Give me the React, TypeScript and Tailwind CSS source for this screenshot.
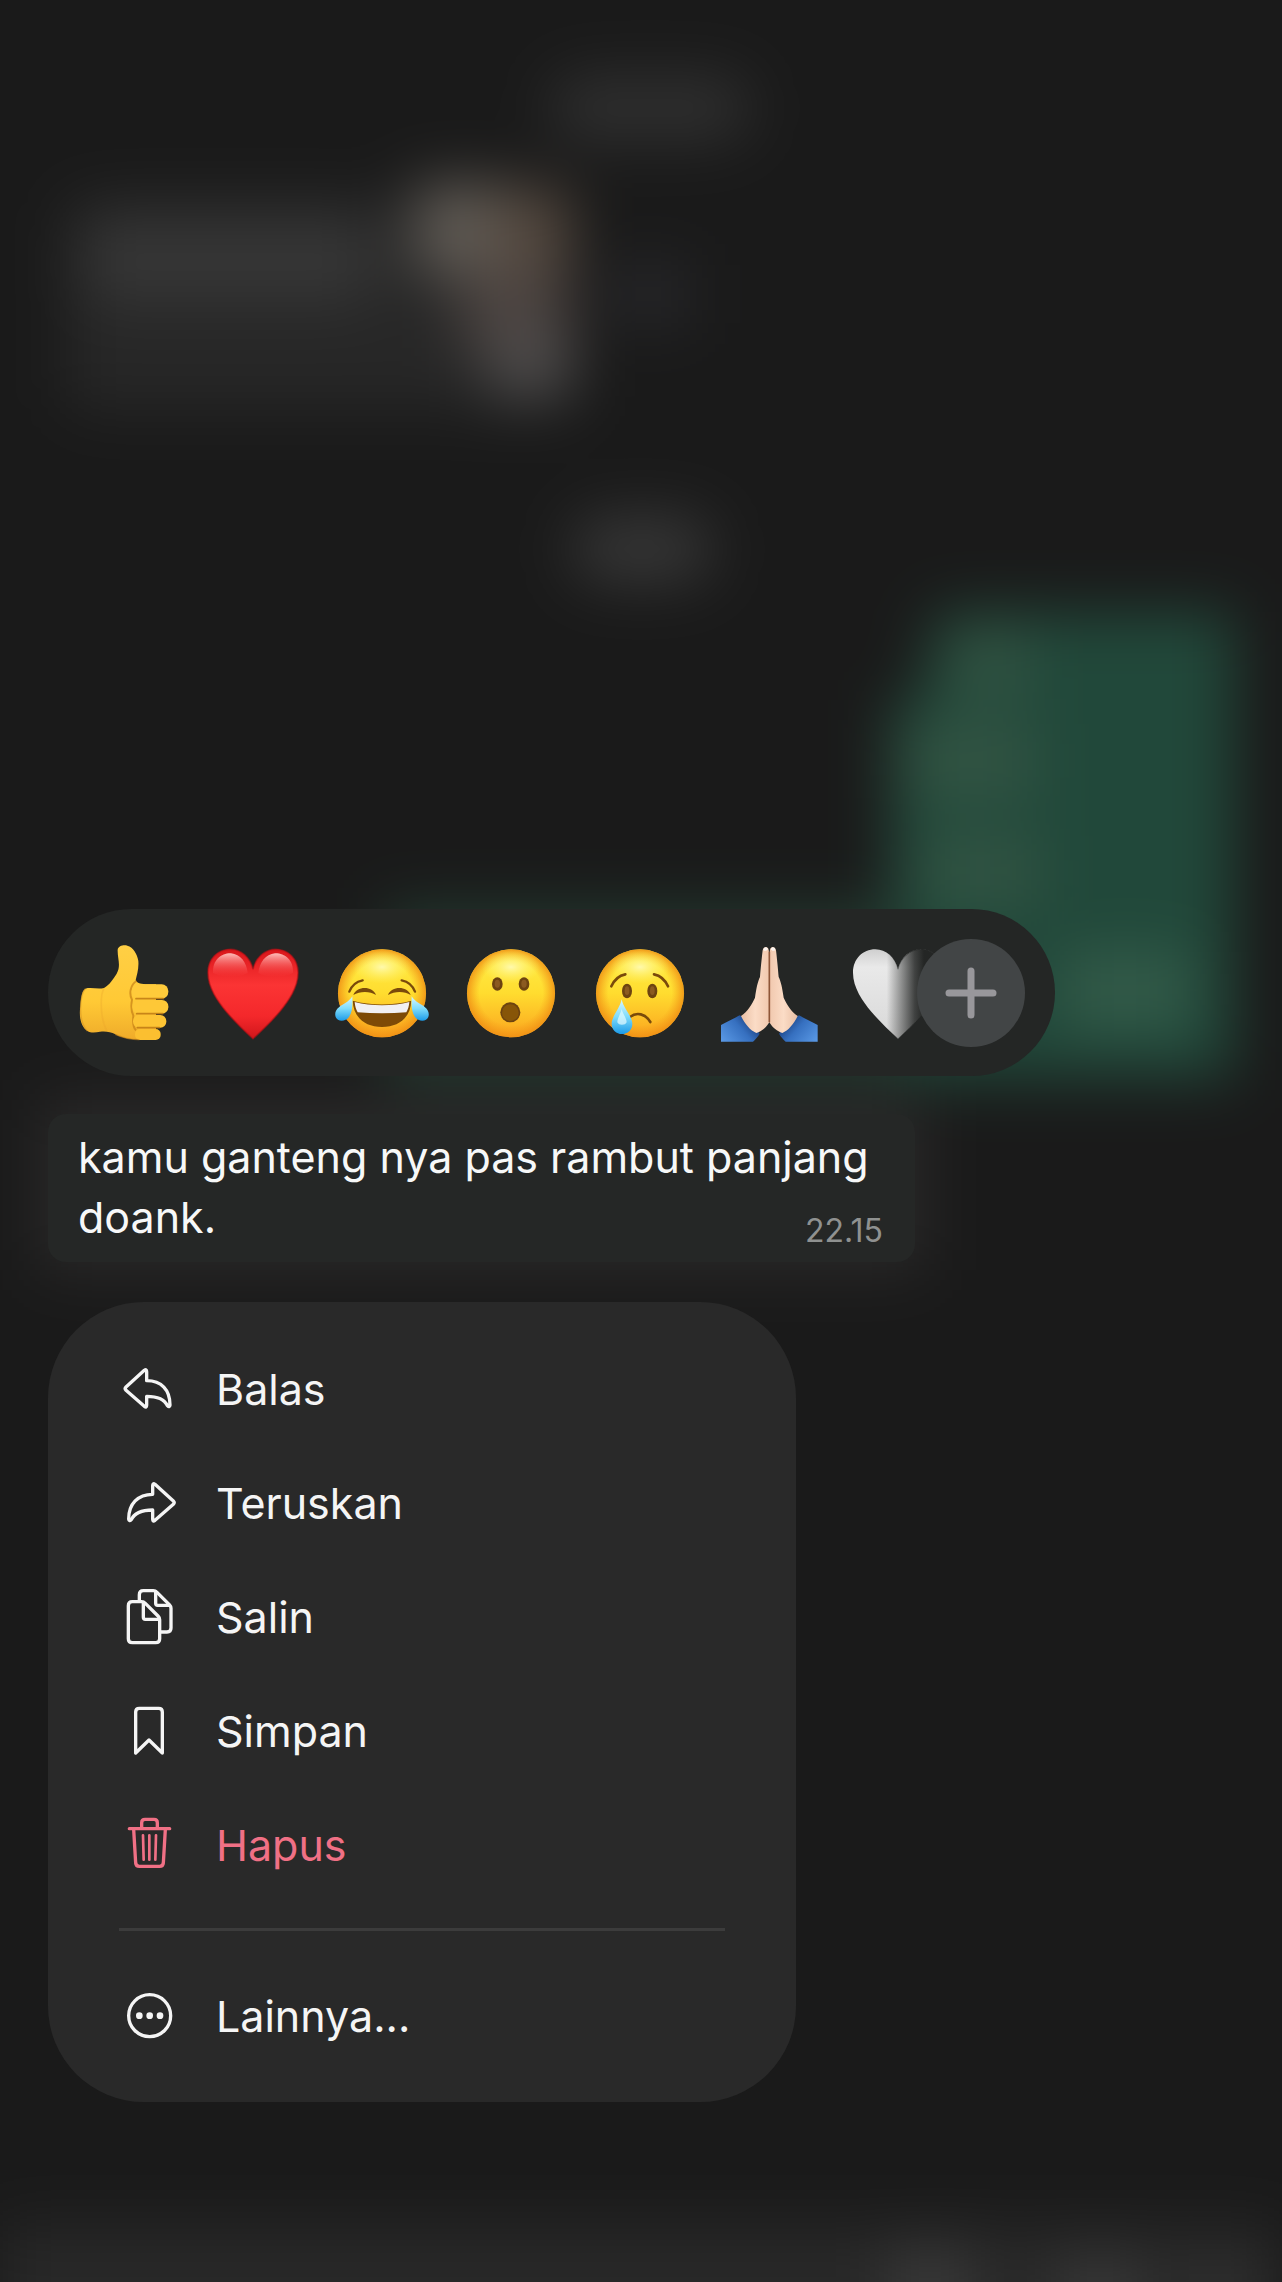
import React from 'react';

type MenuItem = {
  id: string;
  label: string;
  icon: React.ReactNode;
  danger?: boolean;
};

const HEART =
  'M144 281C112 252 84 224 64 200C38 168 9 128 9 83C9 42 38 13 76 13C108 13 136 38 144 73C152 38 180 13 212 13C250 13 279 42 279 83C279 128 250 168 224 200C204 224 176 252 144 281Z';

function EmojiSvg({ children }: { children: React.ReactNode }) {
  return (
    <svg viewBox="0 0 288 288" className="w-24 h-24 overflow-visible" aria-hidden="true">
      {children}
    </svg>
  );
}

function Face() {
  return (
    <>
      <circle cx="144" cy="145" r="132" fill="url(#faceBase)" />
      <circle cx="144" cy="145" r="132" fill="url(#faceRim)" />
      <ellipse cx="144" cy="66" rx="88" ry="50" fill="url(#faceShine)" />
    </>
  );
}

function ThumbsUp() {
  return (
    <EmojiSvg>
      <path
        d="M125 14C127 3 142 -1 154 2C172 6 184 28 187 48C189 72 182 92 179 106C184 116 198 118 214 118H240V284H196C170 284 140 280 118 268C104 260 88 258 72 260C58 263 44 264 34 258C16 246 8 218 13 184C15 158 18 136 28 131C46 126 66 134 84 129C100 120 112 102 122 86C136 62 124 40 125 14Z"
        fill="url(#handSkin)"
      />
      <path d="M84 130C72 150 72 220 92 256" fill="none" stroke="#e9a12a" strokeWidth="5" opacity="0.3" />
      <path d="M28 131C12 150 4 226 34 258" fill="none" stroke="#d38f20" strokeWidth="4" opacity="0.5" />
      <path d="M182 108C164 118 158 146 168 164C164 186 168 204 172 212C170 232 174 250 180 256" fill="none" stroke="#c47f17" strokeWidth="6" opacity="0.7" />
      <rect x="167" y="118" width="110" height="43" rx="20" fill="#ffcb3b" />
      <rect x="169" y="165" width="108" height="41" rx="19" fill="#fec837" />
      <rect x="171" y="210" width="100" height="38" rx="18" fill="#fdc434" />
      <rect x="177" y="252" width="77" height="33" rx="15" fill="#fbbf30" />
      <path d="M180 161H262M182 206H260M184 248H250" stroke="#bb7612" strokeWidth="5" strokeLinecap="round" opacity="0.8" />
      <path d="M190 284C160 284 140 278 118 268" fill="none" stroke="#cf8a1c" strokeWidth="4" opacity="0.6" />
    </EmojiSvg>
  );
}

function RedHeart() {
  return (
    <EmojiSvg>
      <path d={HEART} fill="url(#heartRed)" />
      <path d={HEART} fill="none" stroke="#b90f14" strokeWidth="5" opacity="0.55" />
      <path d="M24 84C22 44 50 24 78 25C106 28 124 50 128 84C96 100 60 100 24 84Z" fill="url(#heartShine)" />
      <path d="M264 84C266 44 238 24 210 25C182 28 164 50 160 84C192 100 228 100 264 84Z" fill="url(#heartShine)" />
    </EmojiSvg>
  );
}

function Joy() {
  return (
    <EmojiSvg>
      <Face />
      <g fill="none" stroke="#7a4a0b" strokeLinecap="round">
        <path d="M46 140C52 124 66 110 86 106" strokeWidth="7" />
        <path d="M243 140C237 124 223 110 203 106" strokeWidth="7" />
      </g>
      <path d="M58 150C68 122 116 122 126 150C108 138 78 138 58 150Z" fill="#7a4a0b" />
      <path d="M162 150C172 122 220 122 230 150C212 138 182 138 162 150Z" fill="#7a4a0b" />
      <path d="M56 167C110 182 178 182 232 167C230 216 196 246 144 246C92 246 58 216 56 167Z" fill="#7d4a06" />
      <path d="M62 171C112 184 176 184 226 171C225 184 222 193 217 202C170 206 118 206 71 202C66 193 63 184 62 171Z" fill="#f1f0f3" />
      <path d="M55 154C56 180 56 200 45 216C33 232 10 230 5 216C-2 194 20 182 34 174C44 168 50 162 55 154Z" fill="url(#tear)" />
      <path d="M233 154C232 180 232 200 243 216C255 232 278 230 283 216C290 194 268 182 254 174C244 168 238 162 233 154Z" fill="url(#tear)" />
    </EmojiSvg>
  );
}

function Surprised() {
  return (
    <EmojiSvg>
      <Face />
      <ellipse cx="103" cy="117" rx="16" ry="20" fill="#6d4310" />
      <ellipse cx="183" cy="117" rx="16" ry="20" fill="#6d4310" />
      <ellipse cx="103" cy="116" rx="8" ry="12" fill="#8b5a20" />
      <ellipse cx="183" cy="116" rx="8" ry="12" fill="#8b5a20" />
      <circle cx="142" cy="202" r="30" fill="#6d4310" />
      <circle cx="142" cy="203" r="25" fill="#875508" />
    </EmojiSvg>
  );
}

function Crying() {
  return (
    <EmojiSvg>
      <Face />
      <g fill="none" stroke="#7a4a0b" strokeWidth="8" strokeLinecap="round">
        <path d="M58 124C66 106 80 92 100 88" />
        <path d="M228 124C220 106 206 92 186 88" />
        <path d="M114 216C134 200 160 206 175 231" />
      </g>
      <ellipse cx="105" cy="138" rx="15" ry="22" fill="#6d4310" />
      <ellipse cx="181" cy="138" rx="15" ry="22" fill="#6d4310" />
      <ellipse cx="105" cy="137" rx="7" ry="13" fill="#8b5a20" />
      <ellipse cx="181" cy="137" rx="7" ry="13" fill="#8b5a20" />
      <path d="M89 163C94 190 121 214 121 236C121 254 107 267 90 267C73 267 59 254 59 236C59 214 84 190 89 163Z" fill="url(#tear)" />
      <path d="M89 192C94 210 104 220 104 232C100 242 80 242 76 232C76 220 85 208 89 192Z" fill="#e6fbff" opacity="0.7" />
    </EmojiSvg>
  );
}

function PrayHalf() {
  return (
    <>
      <path d="M0 240C18 230 38 222 56 211C78 222 100 244 116 266C110 276 102 284 96 290H0Z" fill="url(#sleeve)" />
      <path
        d="M143 14C141 4 128 3 125 16C121 50 119 74 117 96C110 110 106 130 102 158C94 176 80 200 60 213C72 238 88 256 106 264C122 258 134 250 145 232V30Z"
        fill="url(#praySkin)"
      />
      <path d="M127 14C129 6 137 4 141 12C139 18 130 20 127 14Z" fill="#fff" opacity="0.8" />
    </>
  );
}

function Pray() {
  return (
    <EmojiSvg>
      <PrayHalf />
      <g transform="translate(290 0) scale(-1 1)">
        <PrayHalf />
      </g>
      <path d="M145 20V232" stroke="#8f5638" strokeWidth="5" />
    </EmojiSvg>
  );
}

function WhiteHeart() {
  return (
    <EmojiSvg>
      <path d={HEART} fill="url(#heartWhite)" />
      <path d={HEART} fill="url(#heartFade)" stroke="url(#heartFade)" strokeWidth="3" />
    </EmojiSvg>
  );
}

// Gradients shared by all the emoji drawings
function EmojiGradients() {
  return (
    <svg width="0" height="0" className="absolute" aria-hidden="true">
      <defs>
        <linearGradient id="faceBase" x1="0" y1="0" x2="0" y2="1">
          <stop offset="0" stopColor="#fff04a" />
          <stop offset="0.5" stopColor="#ffdc2f" />
          <stop offset="1" stopColor="#fba51f" />
        </linearGradient>
        <radialGradient id="faceRim" cx="0.5" cy="0.5" r="0.5">
          <stop offset="0.72" stopColor="#f59a17" stopOpacity="0" />
          <stop offset="1" stopColor="#ef8f14" stopOpacity="0.85" />
        </radialGradient>
        <radialGradient id="faceShine">
          <stop offset="0" stopColor="#fffbb8" stopOpacity="0.9" />
          <stop offset="1" stopColor="#fff46a" stopOpacity="0" />
        </radialGradient>
        <linearGradient id="handSkin" x1="0" y1="0" x2="0" y2="1">
          <stop offset="0" stopColor="#ffcf45" />
          <stop offset="0.6" stopColor="#ffc935" />
          <stop offset="1" stopColor="#efab2a" />
        </linearGradient>
        <linearGradient id="heartRed" x1="0" y1="0" x2="0" y2="1">
          <stop offset="0" stopColor="#d9161b" />
          <stop offset="0.4" stopColor="#fb3434" />
          <stop offset="0.75" stopColor="#f4282b" />
          <stop offset="1" stopColor="#d0161b" />
        </linearGradient>
        <linearGradient id="heartShine" x1="0" y1="0" x2="0" y2="1">
          <stop offset="0" stopColor="#ffc4c0" stopOpacity="0.95" />
          <stop offset="1" stopColor="#ff4545" stopOpacity="0" />
        </linearGradient>
        <linearGradient id="tear" x1="0" y1="0" x2="0" y2="1">
          <stop offset="0" stopColor="#d9f7ff" />
          <stop offset="0.5" stopColor="#7fdcfb" />
          <stop offset="1" stopColor="#1c9be8" />
        </linearGradient>
        <linearGradient id="sleeve" x1="0" y1="1" x2="1" y2="0.4">
          <stop offset="0" stopColor="#5b9ae6" />
          <stop offset="0.6" stopColor="#3670c0" />
          <stop offset="1" stopColor="#173a78" />
        </linearGradient>
        <linearGradient id="praySkin" x1="0" y1="0" x2="1" y2="0">
          <stop offset="0" stopColor="#e9bfa4" />
          <stop offset="0.5" stopColor="#fbdcc6" />
          <stop offset="1" stopColor="#f1c8ae" />
        </linearGradient>
        <linearGradient id="heartWhite" x1="0" y1="0" x2="0" y2="1">
          <stop offset="0" stopColor="#cfcfcf" />
          <stop offset="0.2" stopColor="#e9e9e9" />
          <stop offset="1" stopColor="#d8d8d8" />
        </linearGradient>
        <linearGradient id="heartFade" gradientUnits="userSpaceOnUse" x1="110" y1="0" x2="222" y2="0">
          <stop offset="0" stopColor="#242625" stopOpacity="0" />
          <stop offset="0.75" stopColor="#242625" stopOpacity="0.85" />
          <stop offset="1" stopColor="#242625" />
        </linearGradient>
      </defs>
    </svg>
  );
}

function Icon({ children }: { children: React.ReactNode }) {
  return (
    <svg
      viewBox="0 0 180 180"
      className="w-[60px] h-[60px] shrink-0"
      fill="none"
      stroke="currentColor"
      strokeWidth="10"
      strokeLinecap="round"
      strokeLinejoin="round"
      aria-hidden="true"
    >
      {children}
    </svg>
  );
}

const reactions = [
  { id: 'jempol', label: 'Jempol', emoji: <ThumbsUp /> },
  { id: 'hati', label: 'Hati', emoji: <RedHeart /> },
  { id: 'tertawa', label: 'Tertawa', emoji: <Joy /> },
  { id: 'kaget', label: 'Kaget', emoji: <Surprised /> },
  { id: 'sedih', label: 'Sedih', emoji: <Crying /> },
  { id: 'terima-kasih', label: 'Terima kasih', emoji: <Pray /> },
  { id: 'hati-putih', label: 'Hati putih', emoji: <WhiteHeart /> },
];

const menuItems: MenuItem[] = [
  {
    id: 'reply',
    label: 'Balas',
    icon: (
      <Icon>
        <path d="M24 84L79 34Q86 29 86 38V65C130 65 156 92 156 138Q155 147 148 140C140 122 124 112 86 112V139Q86 147 79 142L24 94Q19 89 24 84Z" />
      </Icon>
    ),
  },
  {
    id: 'forward',
    label: 'Teruskan',
    icon: (
      <Icon>
        <path d="M166 84L111 34Q104 29 104 38V64C60 64 32 92 32 138Q33 147 40 140C48 122 66 111 104 111V139Q104 147 111 142L166 94Q171 89 166 84Z" />
      </Icon>
    ),
  },
  {
    id: 'copy',
    label: 'Salin',
    icon: (
      <Icon>
        <path d="M43 44H71Q77 44 82 49L120 87Q125 92 125 98V155Q125 167 113 167H43Q31 167 31 155V56Q31 44 43 44Z" />
        <path d="M76 46V91Q76 97 82 97H123" />
        <path d="M64 42V23Q64 11 76 11H106Q112 11 117 16L154 53Q159 58 159 64V123Q159 135 147 135H129" />
        <path d="M113 14V49Q113 55 119 55H155" />
      </Icon>
    ),
  },
  {
    id: 'save',
    label: 'Simpan',
    icon: (
      <Icon>
        <path d="M53 156V33Q53 22 64 22H122Q133 22 133 33V156L93 117Z" />
      </Icon>
    ),
  },
  {
    id: 'delete',
    label: 'Hapus',
    danger: true,
    icon: (
      <Icon>
        <path d="M34 41H155M71 39V23Q71 13 81 13H108Q118 13 118 23V39" />
        <path d="M47 43L53 144Q54 154 64 154H125Q135 154 136 144L142 43" />
        <path d="M75 61L77 134M94 61V134M114 61L112 134" strokeWidth="8" />
      </Icon>
    ),
  },
];

const moreItem: MenuItem = {
  id: 'more',
  label: 'Lainnya...',
  icon: (
    <Icon>
      <circle cx="95" cy="89" r="63" />
      <g fill="currentColor" stroke="none">
        <circle cx="64" cy="89" r="10" />
        <circle cx="95" cy="89" r="10" />
        <circle cx="126" cy="89" r="10" />
      </g>
    </Icon>
  ),
};

function MenuRow({ item }: { item: MenuItem }) {
  return (
    <button
      type="button"
      role="menuitem"
      className={`flex items-center gap-[38px] w-full h-[114px] pl-[70px] text-[43px] leading-[60px] text-left ${
        item.danger ? 'text-[#f07085]' : 'text-[#f5f5f5]'
      }`}
    >
      {item.icon}
      {item.label}
    </button>
  );
}

// Out-of-focus chat behind the menu
function ChatBackdrop() {
  return (
    <svg
      viewBox="0 0 1282 2282"
      preserveAspectRatio="none"
      className="absolute inset-0 w-full h-full"
      aria-hidden="true"
    >
      <defs>
        <filter id="soft" filterUnits="userSpaceOnUse" x="-100" y="-100" width="1482" height="2482" colorInterpolationFilters="sRGB">
          <feGaussianBlur stdDeviation="30" />
        </filter>
      </defs>
      <g filter="url(#soft)">
        <rect x="-100" y="-100" width="1482" height="2482" fill="#1a1a1a" />
        <rect x="550" y="76" width="200" height="64" rx="30" fill="#303030" />
        <rect x="66" y="200" width="500" height="210" rx="20" fill="#272727" />
        <rect x="84" y="216" width="290" height="86" rx="20" fill="#363636" />
        <rect x="416" y="184" width="100" height="90" fill="#625d57" />
        <rect x="490" y="190" width="80" height="110" fill="#564a40" />
        <rect x="460" y="270" width="110" height="80" fill="#4c4441" />
        <rect x="490" y="336" width="82" height="60" fill="#504e4e" />
        <rect x="610" y="264" width="80" height="60" fill="#27272a" />
        <rect x="572" y="516" width="140" height="66" rx="30" fill="#373737" />
        <path d="M936 612H1234V1080H384V912H890V700H920Z" fill="#21483a" />
        <rect x="384" y="908" width="520" height="172" fill="#22392f" />
        <rect x="950" y="632" width="80" height="64" fill="#325342" />
        <rect x="906" y="724" width="130" height="74" fill="#325443" />
        <rect x="920" y="836" width="120" height="70" fill="#325443" />
        <rect x="1060" y="952" width="130" height="76" fill="#335b49" />
        <rect x="40" y="1100" width="884" height="170" fill="#2a2929" />
        <rect x="0" y="2226" width="1282" height="156" fill="#282828" />
        <rect x="890" y="2250" width="80" height="80" fill="#3a3a3a" />
        <rect x="1060" y="2260" width="80" height="80" fill="#393939" />
        <rect x="1190" y="2264" width="60" height="80" fill="#303030" />
      </g>
    </svg>
  );
}

export default function App() {
  return (
    <div className="relative min-h-screen overflow-hidden bg-[#1a1a1a] font-['Inter','Liberation_Sans',sans-serif]">
      <ChatBackdrop />
      <EmojiGradients />

      <main className="relative flex flex-col items-start pt-[909px] pl-12 pr-12 pb-[180px]">
        {/* Reactions */}
        <div className="flex items-center h-[167px] pl-[11px] pr-[30px] rounded-full bg-[#242625]">
          {reactions.map((reaction) => (
            <button
              key={reaction.id}
              type="button"
              aria-label={reaction.label}
              className="flex items-center justify-center w-[129px] h-full"
            >
              {reaction.emoji}
            </button>
          ))}
          <button
            type="button"
            aria-label="Reaksi lain"
            className="flex items-center justify-center w-[108px] h-[108px] -ml-[45px] rounded-full bg-[#424546] text-[#98979b]"
          >
            <svg viewBox="0 0 52 52" className="w-[52px] h-[52px]" aria-hidden="true">
              <path d="M26 4V48M4 26H48" stroke="currentColor" strokeWidth="7" strokeLinecap="round" />
            </svg>
          </button>
        </div>

        {/* Message */}
        <div className="w-full max-w-[867px] mt-[38px] pt-[13px] pb-[15px] pl-[30px] pr-8 rounded-[18px] bg-[#252726]">
          <p className="text-[43px] leading-[60px] text-[#f7f8f8]">
            kamu ganteng nya pas rambut panjang doank.
            <time className="float-right pt-7 text-[32px] leading-[32px] text-[#8f9190]">22.15</time>
          </p>
        </div>

        {/* Context menu */}
        <div role="menu" className="w-full max-w-[748px] mt-10 pt-[30px] pb-[29px] rounded-[96px] bg-[#292929]">
          {menuItems.map((item) => (
            <MenuRow key={item.id} item={item} />
          ))}
          <hr className="mx-[71px] mt-[26px] mb-7 border-0 h-[3px] bg-[#3c3c3c]" />
          <MenuRow item={moreItem} />
        </div>
      </main>
    </div>
  );
}
